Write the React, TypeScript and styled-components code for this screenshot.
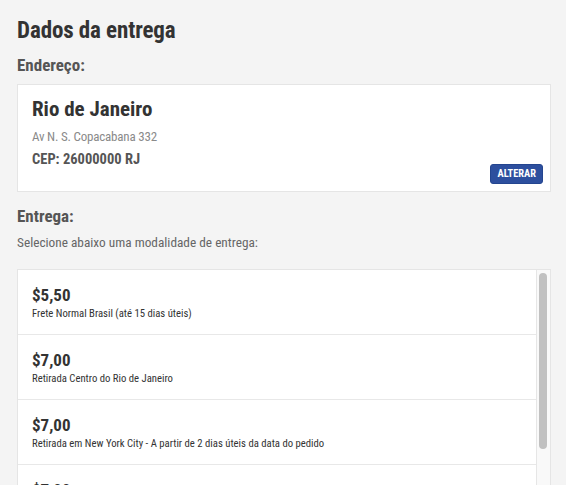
import styled, { createGlobalStyle } from 'styled-components';

const GlobalStyle = createGlobalStyle`
	html, body {
		margin: 0;
		padding: 0;
		height: 100%;
		overflow: hidden;
		background: #f4f4f4;
	}
	body {
		font-family: 'Roboto Condensed', 'Archivo Narrow', 'DejaVu Sans Condensed', sans-serif;
		color: #333;
	}
`;

const Page = styled.div`
	padding: 17px 15px 0 17px;
	width: 534px;
`;

const Title = styled.h1`
	margin: 0;
	font-size: 23px;
	line-height: 28px;
	font-weight: 700;
	letter-spacing: -0.1px;
	color: #333;
`;

const Label = styled.h2<{ $gap: number }>`
	margin: ${(p) => p.$gap}px 0 0;
	font-size: 17px;
	line-height: 20px;
	font-weight: 700;
	color: #555;
`;

const AddressCard = styled.div`
	margin-top: 9px;
	background: #fff;
	border: 1px solid #e5e5e5;
	padding: 12px 7px 7px 14px;
	display: flex;
	flex-direction: column;
`;

const City = styled.div`
	font-size: 21px;
	line-height: 24px;
	font-weight: 700;
	color: #333;
`;

const Street = styled.div`
	margin-top: 8px;
	font-size: 13px;
	line-height: 16px;
	letter-spacing: -0.2px;
	color: #8a8a8a;
`;

const Zip = styled.div`
	margin-top: 6px;
	font-size: 14.5px;
	line-height: 18px;
	font-weight: 700;
	color: #555;
`;

const Actions = styled.div`
	display: flex;
	justify-content: flex-end;
	margin-top: -5px;
`;

const ChangeButton = styled.button`
	height: 20px;
	padding: 0 6px;
	border: 1px solid #24458f;
	border-radius: 3px;
	background: #2d4f9e;
	color: #fff;
	font-family: inherit;
	font-size: 10.4px;
	line-height: 18px;
	font-weight: 700;
	cursor: pointer;
`;

const Hint = styled.p`
	margin: 9px 0 0;
	font-size: 13.3px;
	line-height: 16px;
	color: #666;
`;

const OptionBox = styled.div`
	margin-top: 18px;
	height: 240px;
	display: flex;
	overflow: hidden;
	background: #fff;
	border: 1px solid #e5e5e5;
`;

const OptionRows = styled.div`
	flex: 1;
	min-width: 0;
`;

const ScrollRail = styled.div`
	width: 14px;
	box-sizing: border-box;
	padding: 3px 3px 0 2px;
	background: #f9f9f9;
	border-left: 1px solid #e6e6e6;
`;

const ScrollThumb = styled.div`
	height: 176px;
	border-radius: 4px;
	background: #c1c1c1;
`;

const Option = styled.div`
	height: 65px;
	padding: 15px 14px 0;
	box-sizing: border-box;
	border-bottom: 1px solid #e8e8e8;
	cursor: pointer;
`;

const Price = styled.div`
	font-size: 17px;
	line-height: 20px;
	font-weight: 700;
	color: #333;
`;

const Description = styled.div`
	margin-top: 2px;
	font-size: 10.7px;
	line-height: 13px;
	color: #333;
`;

const options = [
	{ price: '$5,50', text: 'Frete Normal Brasil (até 15 dias úteis)' },
	{ price: '$7,00', text: 'Retirada Centro do Rio de Janeiro' },
	{ price: '$7,00', text: 'Retirada em New York City - A partir de 2 dias úteis da data do pedido' },
	{ price: '$7,00', text: 'Retirada em São Paulo' }
];

const App = () => {
	return (
		<>
			<GlobalStyle />
			<Page>
				<Title>Dados da entrega</Title>
				<Label $gap={10}>Endereço:</Label>
				<AddressCard>
					<City>Rio de Janeiro</City>
					<Street>Av N. S. Copacabana 332</Street>
					<Zip>CEP: 26000000 RJ</Zip>
					<Actions>
						<ChangeButton type="button">ALTERAR</ChangeButton>
					</Actions>
				</AddressCard>
				<Label $gap={14}>Entrega:</Label>
				<Hint>Selecione abaixo uma modalidade de entrega:</Hint>
				<OptionBox>
					<OptionRows>
						{options.map((option, i) => (
							<Option key={i}>
								<Price>{option.price}</Price>
								<Description>{option.text}</Description>
							</Option>
						))}
					</OptionRows>
					<ScrollRail>
						<ScrollThumb />
					</ScrollRail>
				</OptionBox>
			</Page>
		</>
	);
};

export default App;
